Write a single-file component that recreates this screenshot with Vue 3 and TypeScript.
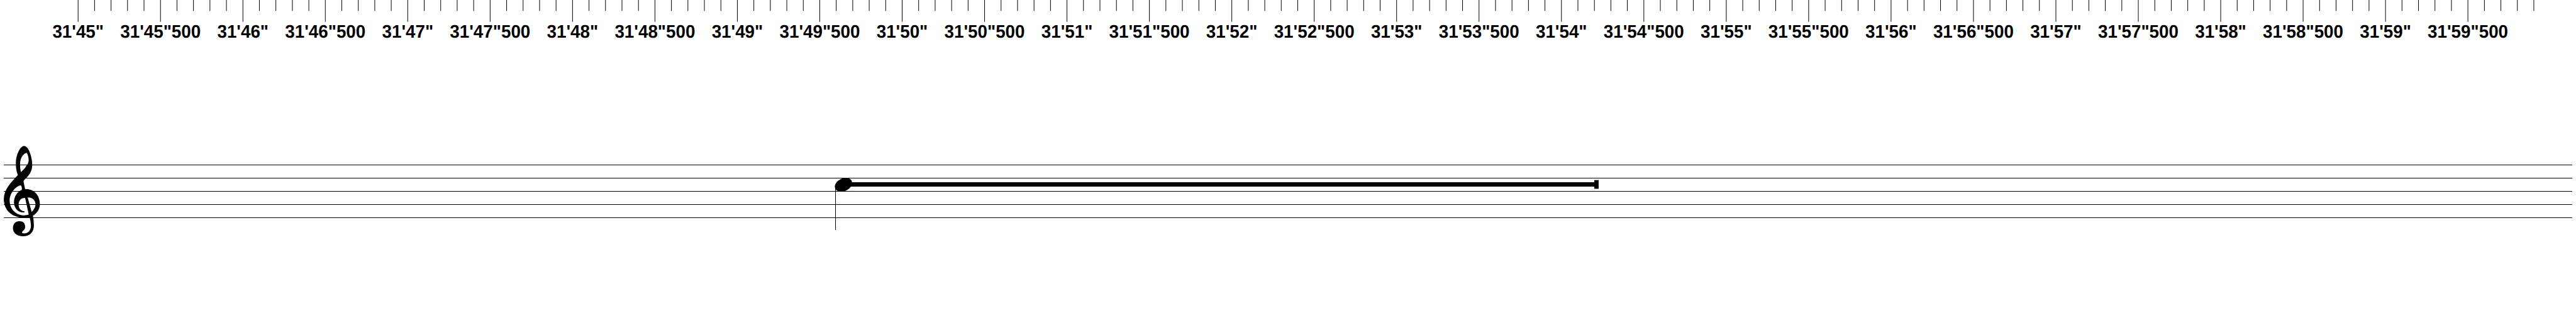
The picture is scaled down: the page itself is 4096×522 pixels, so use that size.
<script setup lang="ts">
interface Tick {
  x: number
  major: boolean
}

interface Label {
  id: number
  text: string
}

const tickOrigin = 143
const tickStep = 30.18
const tickCount = 150
const staffLines: number[] = [302.5, 326.5, 350.5, 374.5, 398.5]

const ticks: Tick[] = Array.from({ length: tickCount }, (_, i) => ({
  x: tickOrigin + i * tickStep,
  major: i % 5 === 0,
}))

const labels: Label[] = Array.from({ length: 30 }, (_, i) => {
  const seconds = 45 + Math.floor(i / 2)
  return { id: i, text: `31'${seconds}"${i % 2 ? '500' : ''}` }
})
</script>

<template>
  <main class="score">
    <header class="ruler">
      <svg class="ticks" viewBox="0 0 4717 40" preserveAspectRatio="none">
        <line
          v-for="tick in ticks"
          :key="tick.x"
          :x1="tick.x"
          :x2="tick.x"
          y1="0"
          :y2="tick.major ? 40 : 20"
        />
      </svg>
      <div class="labels">
        <span v-for="label in labels" :key="label.id" class="label">{{ label.text }}</span>
      </div>
    </header>
    <svg class="staff" viewBox="0 249.9 4717 200" preserveAspectRatio="none">
      <line v-for="y in staffLines" :key="y" class="staff-line" x1="7" x2="4710" :y1="y" :y2="y" />
      <!-- treble clef -->
      <g transform="translate(0 250) scale(0.33333)">
        <path
          fill-rule="evenodd"
          d="M132 52 C156 52 177 109 177 158 C177 195 157 218 133 240 Q128 245 130 253 L138 290
             C184 286 219 321 219 372 C219 400 204 422 181 436 Q186 462 186 490
             C186 527 163 549 126 549 C94 549 71 531 71 505 C71 481 85 466 106 466
             C128 466 139 479 138 498 C138 513 126 517 122 525 Q119 531 127 533
             C154 536 170 516 170 490 Q169 466 163 446 Q147 449 130 448
             C64 444 21 405 21 345 C21 294 60 252 98 213 Q87 184 87 150 C87 102 111 52 132 52 Z
             M147 90 C128 93 110 119 110 154 Q110 178 115 197 Q136 179 150 154 C163 138 157 108 147 90 Z
             M120 293 Q121 271 113 269 C90 271 53 310 53 352 C53 402 90 434 132 434
             Q147 434 158 430 L138 338 C115 337 102 354 102 375 C102 396 115 411 134 412
             Q138 415 131 418 C99 420 77 394 77 362 C77 330 94 304 120 293 Z
             M152 336 L174 415 C187 404 195 389 195 374 C195 351 178 335 152 336 Z"
        />
      </g>
      <!-- held note -->
      <line class="stem" x1="1529.4" x2="1529.4" y1="339" y2="422" />
      <ellipse cx="1544.5" cy="338.7" rx="16.6" ry="11.6" transform="rotate(-25 1544.5 338.7)" />
      <rect x="1550" y="334" width="1371" height="8" />
      <rect x="2919.3" y="330" width="8" height="16" />
    </svg>
  </main>
</template>

<style>
body {
  margin: 0;
  background: #fff;
}
</style>

<style scoped>
.score {
  width: 4096px;
  height: 522px;
  overflow: hidden;
  background: #fff;
  color: #000;
}

.ruler {
  height: 217px;
}

.ticks {
  display: block;
  width: 4096px;
  height: 34.73px;
  stroke: #000;
  stroke-width: 1.15;
}

.labels {
  display: flex;
  padding-left: 58.66px;
}

.label {
  flex: 0 0 131.033px;
  display: flex;
  justify-content: center;
  font-family: "Liberation Sans", Arial, sans-serif;
  font-weight: 700;
  font-size: 27.79px;
  line-height: 31px;
  white-space: nowrap;
  text-rendering: geometricPrecision;
  transform: scaleY(1.05);
  transform-origin: 50% 25px;
}

.staff {
  display: block;
  width: 4096px;
  height: 173.67px;
  fill: #000;
}

.staff-line,
.stem {
  stroke: #000;
  stroke-width: 1.152;
  shape-rendering: crispEdges;
}
</style>
